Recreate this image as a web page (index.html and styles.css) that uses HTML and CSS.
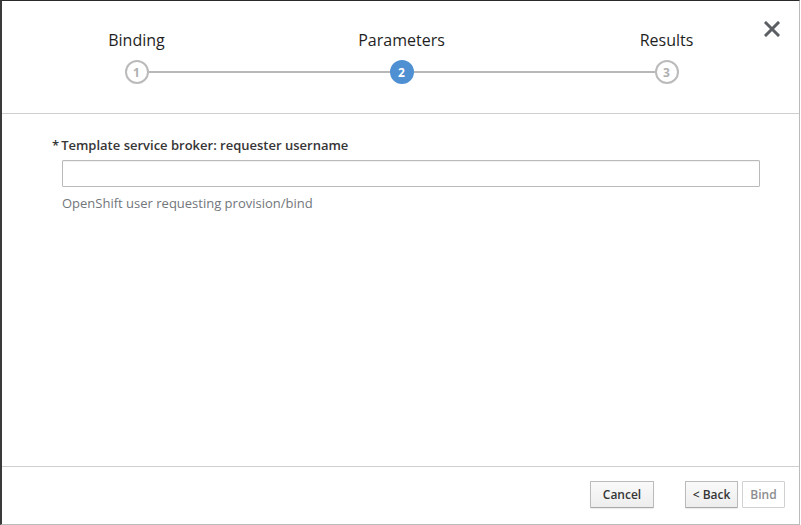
FILE: index.html
```html
<!DOCTYPE html>
<html>
<head>
<meta charset="utf-8">
<link rel="stylesheet" href="styles.css">
</head>
<body>
<div class="modal">
  <div class="header">
    <ol class="steps">
      <li class="step first">
        <span class="step-label">Binding</span>
        <div class="track"><span class="seg"></span><span class="dot">1</span><span class="seg on"></span></div>
      </li>
      <li class="step active">
        <span class="step-label">Parameters</span>
        <div class="track"><span class="seg on"></span><span class="dot">2</span><span class="seg on"></span></div>
      </li>
      <li class="step last">
        <span class="step-label">Results</span>
        <div class="track"><span class="seg on"></span><span class="dot">3</span><span class="seg"></span></div>
      </li>
    </ol>
    <button class="close" aria-label="Close">
      <svg width="16" height="16" viewBox="0 0 16 16"><path d="M2 2 L14 14 M14 2 L2 14" stroke="#5b5e62" stroke-width="3" stroke-linecap="square"/></svg>
    </button>
  </div>
  <div class="body">
    <div class="form-group">
      <label class="label"><span class="req">*</span>Template service broker: requester username</label>
      <input class="input" type="text">
      <div class="help">OpenShift user requesting provision/bind</div>
    </div>
  </div>
  <div class="footer">
    <button class="btn btn-cancel">Cancel</button>
    <div class="nav">
      <button class="btn btn-back">&lt; Back</button>
      <button class="btn disabled">Bind</button>
    </div>
  </div>
</div>
</body>
</html>
```
FILE: styles.css
```css
html, body { margin: 0; padding: 0; background: #fff; }
body { font-family: "Open Sans", "Noto Sans", sans-serif; color: #363636; }
.modal {
  position: relative;
  box-sizing: border-box;
  width: 800px;
  height: 525px;
  border: 1px solid #bbb;
  border-top-color: #2a2a2a;
  border-left: 2px solid #3a3a3a;
  display: flex;
  flex-direction: column;
  background: #fff;
}
.header {
  height: 113px;
  border-bottom: 1px solid #cfcfcf;
  flex: none;
  box-sizing: border-box;
}
.steps {
  list-style: none;
  margin: 0;
  padding: 27px 0 0 2px;
  display: grid;
  grid-template-columns: 1fr 1fr 1fr;
}
.step { display: flex; flex-direction: column; align-items: center; }
.step-label { font-size: 16px; line-height: 24px; color: #1f1f1f; }
.track { display: flex; align-items: center; width: 100%; margin-top: 8px; }
.seg { flex: 1; height: 2px; }
.seg.on { background: #b8b8b8; }
.dot {
  box-sizing: border-box;
  width: 24px; height: 24px;
  border: 2px solid #bbb;
  border-radius: 50%;
  display: flex; align-items: center; justify-content: center;
  font-size: 12px; font-weight: 700; color: #b0b0b0;
  background: #fff;
}
.step.active .dot { background: #4f90d3; border-color: #4f90d3; color: #fff; }
.close {
  position: absolute;
  top: 20px; right: 19px;
  background: none; border: 0; padding: 0;
  width: 16px; height: 16px;
  cursor: pointer;
}
.close svg { display: block; }
.body { flex: 1; padding: 22px 0 0 50px; box-sizing: border-box; }
.label { display: block; font-size: 13px; font-weight: 600; color: #363636; line-height: 18px; }
.req { margin-right: 2px; }
.input {
  display: block;
  box-sizing: border-box;
  margin: 6px 0 0 10px;
  width: 698px; height: 27px;
  border: 1px solid #bababa;
  box-shadow: inset 0 1px 1px rgba(3,3,3,0.06);
  border-radius: 1px;
  outline: none;
  padding: 0 6px;
}
.help { margin: 7px 0 0 10px; font-size: 13px; color: #72767b; line-height: 18px; }
.footer {
  flex: none;
  height: 58px;
  border-top: 1px solid #cfcfcf;
  box-sizing: border-box;
  display: flex;
  justify-content: flex-end;
  align-items: flex-start;
  padding: 14px 14px 0 0;
  gap: 31px;
}
.nav { display: flex; gap: 4px; }
.btn {
  font-family: "Open Sans", "Noto Sans", sans-serif;
  font-size: 12px; font-weight: 600;
  height: 27px;
  padding: 0;
  border: 1px solid #bbb;
  border-bottom-color: #a9a9a9;
  border-radius: 1px;
  background: linear-gradient(#fafafa, #ededed);
  color: #363636;
  box-shadow: 0 1px 1px rgba(3,3,3,0.08);
}
.btn-cancel { width: 64px; }
.btn-back { width: 53px; }
.btn.disabled { width: 43px; background: #fff; border-color: #d1d1d1; color: #8b8d8f; box-shadow: none; }
```
